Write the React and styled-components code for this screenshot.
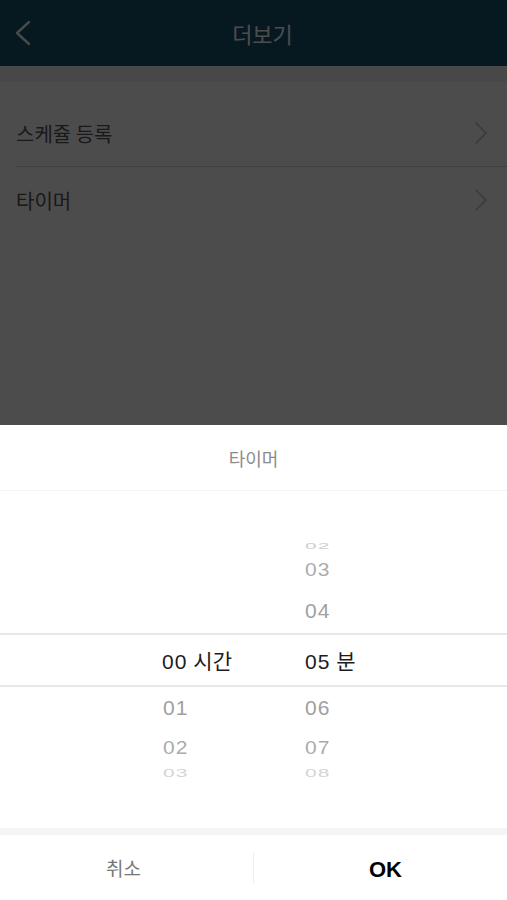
import styled, { createGlobalStyle } from "styled-components";

const GlobalStyle = createGlobalStyle`
  html, body {
    margin: 0;
    padding: 0;
    height: 100%;
    background: #fff;
  }
  body {
    font-family: "Liberation Sans", "Noto Sans CJK KR", sans-serif;
  }
`;

const Page = styled.div`
  width: 100%;
  min-height: 100vh;
  background: #fff;
`;

const Header = styled.header`
  height: 66px;
  display: grid;
  grid-template-columns: 60px 1fr 42px;
  align-items: center;
  background: #14506b;
`;

const BackButton = styled.div`
  padding-left: 15px;
  display: flex;
  align-items: center;
`;

const HeaderTitle = styled.h1`
  margin: 0;
  text-align: center;
  font-family: "Noto Sans CJK KR", sans-serif;
  font-size: 22px;
  font-weight: 400;
  color: #ffffff;
`;

const TopBand = styled.div`
  height: 16px;
  background: #f2f2f2;
`;

const List = styled.ul`
  list-style: none;
  margin: 0;
  padding: 18px 0 0 16px;
`;

const Row = styled.li`
  height: 66px;
  display: flex;
  align-items: center;
  justify-content: space-between;
  padding-right: 20px;
  border-bottom: ${(p) => (p.$last ? "none" : "1px solid #d8d8d8")};
  font-family: "Noto Sans CJK KR", sans-serif;
  font-size: 20px;
  color: #555;
`;

const Backdrop = styled.div`
  position: fixed;
  inset: 0;
  background: rgba(0, 0, 0, 0.7);
  display: flex;
  flex-direction: column;
  justify-content: flex-end;
`;

const Sheet = styled.div`
  height: 475px;
  background: #fff;
  display: flex;
  flex-direction: column;
`;

const SheetTitle = styled.div`
  height: 65px;
  display: flex;
  align-items: center;
  justify-content: center;
  border-bottom: 1px solid #f3f3f3;
  font-family: "Noto Sans CJK KR", sans-serif;
  font-size: 18px;
  color: #8c8c8c;
`;

const Wheel = styled.div`
  height: 337px;
  display: flex;
  flex-direction: column;
`;

const WheelPart = styled.div`
  height: ${(p) => p.$h}px;
  display: grid;
  grid-template-columns: 142px 142px;
  padding-left: 163px;
  align-items: ${(p) => p.$align};
`;

const SelectedRow = styled.div`
  height: 50px;
  display: grid;
  grid-template-columns: 143px 142px;
  padding-left: 162px;
  align-items: center;
  border-top: 2px solid #e8e8e8;
  border-bottom: 2px solid #e8e8e8;
`;

const Column = styled.div`
  display: flex;
  flex-direction: column;
`;

const Item = styled.div`
  height: ${(p) => p.$h}px;
  display: flex;
  align-items: center;
  font-size: 21px;
  letter-spacing: 1px;
  color: ${(p) => p.$color};
  transform: scaleY(${(p) => p.$scale});
  transform-origin: left center;
`;

const SelectedValue = styled.div`
  font-size: 21px;
  letter-spacing: 1px;
  color: #1c1c1c;
`;

const Unit = styled.span`
  font-family: "Noto Sans CJK KR", sans-serif;
  letter-spacing: 0;
  margin-left: 6px;
`;

const Gap = styled.div`
  height: 7px;
  background: #f5f5f5;
`;

const Buttons = styled.div`
  flex: 1;
  display: grid;
  grid-template-columns: 253px 1px 1fr;
  align-items: center;
`;

const Divider = styled.div`
  height: 32px;
  background: #f0f0f0;
`;

const Button = styled.button`
  border: none;
  background: none;
  height: 100%;
  padding: ${(p) => (p.$primary ? "4px 0 0 10px" : "0 6px 0 0")};
  font-family: ${(p) =>
    p.$primary ? '"Liberation Sans", sans-serif' : '"Noto Sans CJK KR", sans-serif'};
  font-size: ${(p) => (p.$primary ? "22px" : "19px")};
  font-weight: ${(p) => (p.$primary ? 700 : 400)};
  color: ${(p) => (p.$primary ? "#000" : "#777")};
`;

const aboveMinutes = [
  { v: "02", h: 11, scale: 0.4, color: "#cfcfcf" },
  { v: "03", h: 36, scale: 0.85, color: "#ababab" },
  { v: "04", h: 45, scale: 1, color: "#a0a0a0" },
];

const belowHours = [
  { v: "01", h: 42, scale: 1, color: "#a0a0a0" },
  { v: "02", h: 37, scale: 0.85, color: "#ababab" },
  { v: "03", h: 14, scale: 0.5, color: "#d4d4d4" },
];

const belowMinutes = [
  { v: "06", h: 42, scale: 1, color: "#a0a0a0" },
  { v: "07", h: 37, scale: 0.85, color: "#ababab" },
  { v: "08", h: 14, scale: 0.5, color: "#d4d4d4" },
];

function WheelColumn({ items }) {
  return (
    <Column>
      {items.map((it) => (
        <Item key={it.v} $h={it.h} $scale={it.scale} $color={it.color}>
          {it.v}
        </Item>
      ))}
    </Column>
  );
}

function ChevronLeft() {
  return (
    <svg width="16" height="26" viewBox="0 0 16 26">
      <polyline
        points="14,2 2,13 14,24"
        fill="none"
        stroke="#f0f6fa"
        strokeWidth="2.4"
        strokeLinecap="round"
        strokeLinejoin="round"
      />
    </svg>
  );
}

function ChevronRight() {
  return (
    <svg width="12" height="22" viewBox="0 0 12 22">
      <polyline
        points="1,1 11,11 1,21"
        fill="none"
        stroke="#c4c4c4"
        strokeWidth="1.6"
        strokeLinecap="round"
        strokeLinejoin="round"
      />
    </svg>
  );
}

export default function App() {
  return (
    <>
      <GlobalStyle />
      <Page>
        <Header>
          <BackButton>
            <ChevronLeft />
          </BackButton>
          <HeaderTitle>더보기</HeaderTitle>
          <div />
        </Header>
        <TopBand />
        <List>
          <Row>
            스케쥴 등록
            <ChevronRight />
          </Row>
          <Row $last>
            타이머
            <ChevronRight />
          </Row>
        </List>
      </Page>

      <Backdrop>
        <Sheet>
          <SheetTitle>타이머</SheetTitle>
          <Wheel>
            <WheelPart $h={142} $align="end">
              <Column />
              <WheelColumn items={aboveMinutes} />
            </WheelPart>
            <SelectedRow>
              <SelectedValue>
                00<Unit>시간</Unit>
              </SelectedValue>
              <SelectedValue>
                05<Unit>분</Unit>
              </SelectedValue>
            </SelectedRow>
            <WheelPart $h={141} $align="start">
              <WheelColumn items={belowHours} />
              <WheelColumn items={belowMinutes} />
            </WheelPart>
          </Wheel>
          <Gap />
          <Buttons>
            <Button>취소</Button>
            <Divider />
            <Button $primary>OK</Button>
          </Buttons>
        </Sheet>
      </Backdrop>
    </>
  );
}
